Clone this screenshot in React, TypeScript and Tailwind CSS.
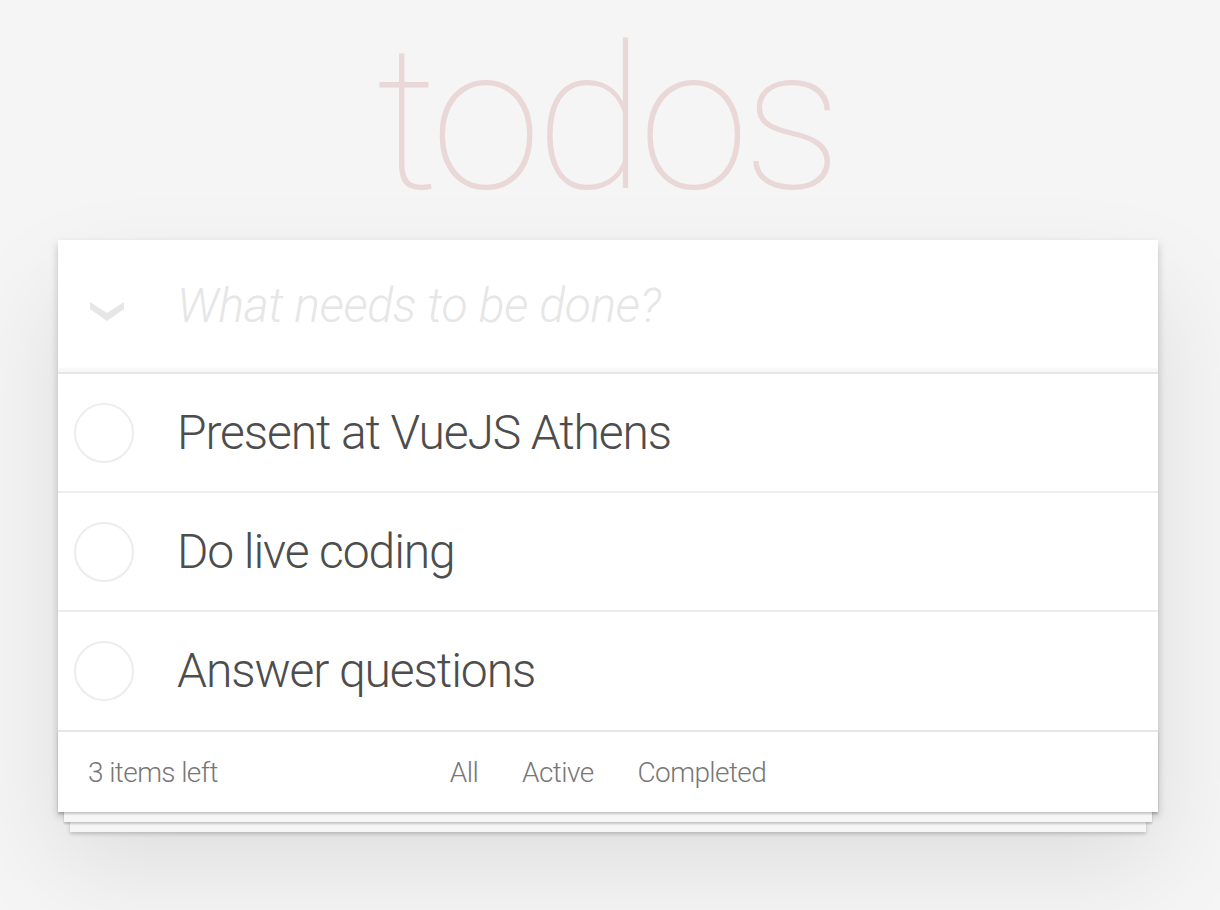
import React from 'react';

const todos = ['Present at VueJS Athens', 'Do live coding', 'Answer questions'];

function Chevron() {
  return (
    <svg width="34" height="19" viewBox="0 0 34 19" className="block">
      <polygon points="0,0 17,11 34,0 34,7 17,19 0,7" fill="#e6e6e6" />
    </svg>
  );
}

function Circle() {
  return (
    <svg width="60" height="60" viewBox="0 0 60 60" className="block">
      <circle cx="30" cy="30" r="29" fill="none" stroke="#ededed" strokeWidth="2" />
    </svg>
  );
}

export default function App() {
  return (
    <div className="min-h-[910px] bg-[#f5f5f5] font-['Roboto',sans-serif] text-[#4d4d4d]">
      <div className="h-[240px] pt-[20px] pr-[8px]">
        <h1 className="text-center text-[200px] leading-[200px] font-thin tracking-[-6px] text-[rgba(175,47,47,0.15)]">
          todos
        </h1>
      </div>

      <section className="ml-[58px] w-[1100px] bg-white shadow-[0_4px_8px_0_rgba(0,0,0,0.2),0_50px_100px_0_rgba(0,0,0,0.1)]">
        <header className="flex items-center h-[132px] shadow-[inset_0_-4px_2px_rgba(0,0,0,0.03)]">
          <div className="w-[119px] pl-[32px] pt-[10px] flex">
            <Chevron />
          </div>
          <div className="text-[48px] italic font-light tracking-[-0.3px] text-[#e6e6e6]">What needs to be done?</div>
        </header>

        <ul className="border-t-2 border-[#e6e6e6]">
          {todos.map((t) => (
            <li key={t} className="flex items-center h-[119px] border-b-2 border-[#ededed] last:border-b-0 last:h-[118px]">
              <div className="w-[119px] pl-[16px]">
                <Circle />
              </div>
              <span className="text-[48px] leading-[58px] font-light tracking-[-1.1px]">{t}</span>
            </li>
          ))}
        </ul>

        <footer className="relative flex items-center h-[82px] px-[30px] pt-[2px] border-t-2 border-[#e6e6e6] text-[28px] font-light tracking-[-0.6px] text-[#777] shadow-[0_2px_2px_rgba(0,0,0,0.2),0_16px_0_-6px_#f6f6f6,0_18px_2px_-6px_rgba(0,0,0,0.2),0_32px_0_-12px_#f6f6f6,0_34px_4px_-12px_rgba(0,0,0,0.2)]">
          <span>3 items left</span>
          <ul className="absolute inset-x-0 top-0 h-full pt-[2px] flex items-center justify-center">
            {['All', 'Active', 'Completed'].map((f) => (
              <li key={f} className="mx-[6px] px-[14px] border-2 border-transparent">
                {f}
              </li>
            ))}
          </ul>
        </footer>
      </section>
    </div>
  );
}
